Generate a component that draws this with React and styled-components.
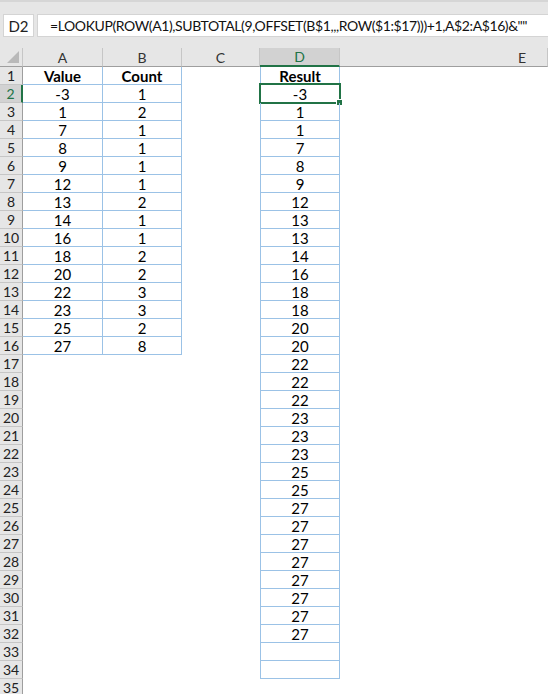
import styled, { createGlobalStyle } from "styled-components";

const GlobalStyle = createGlobalStyle`
  html, body {
    margin: 0;
    padding: 0;
    background: #ffffff;
  }
  body {
    font-family: Lato, "Liberation Sans", sans-serif;
    overflow: hidden;
  }
`;

const GREEN = "#217346";
const TABLE_LINE = "#9bc2e6";
const HEAD_BG = "#e6e6e6";
const HEAD_LINE = "#c6c6c6";

const formula = '=LOOKUP(ROW(A1),SUBTOTAL(9,OFFSET(B$1,,,ROW($1:$17)))+1,A$2:A$16)&""';

const values = [
  [-3, 1], [1, 2], [7, 1], [8, 1], [9, 1], [12, 1], [13, 2], [14, 1],
  [16, 1], [18, 2], [20, 2], [22, 3], [23, 3], [25, 2], [27, 8],
];

const results = [
  -3, 1, 1, 7, 8, 9, 12, 13, 13, 14, 16, 18, 18, 20, 20, 22, 22, 22,
  23, 23, 23, 25, 25, 27, 27, 27, 27, 27, 27, 27, 27,
];

const columns = ["A", "B", "C", "D", "E"];
const ROWS = 35;

export default function App() {
  const rows = [];
  for (let r = 1; r <= ROWS; r++) {
    const inTable = r <= 16;
    const inResult = r <= 34;
    let a = "";
    let b = "";
    let d = "";
    if (r === 1) {
      a = "Value";
      b = "Count";
      d = "Result";
    } else {
      if (inTable) {
        a = values[r - 2][0];
        b = values[r - 2][1];
      }
      if (r - 2 < results.length) d = results[r - 2];
    }
    const bold = r === 1;
    rows.push(
      <RowHead key={`h${r}`} $active={r === 2}>{r}</RowHead>,
      <Cell key={`a${r}`} $boxed={inTable} $bold={bold}>{a}</Cell>,
      <Cell key={`b${r}`} $boxed={inTable} $bold={bold}>{b}</Cell>,
      <Cell key={`c${r}`} />,
      <Cell key={`d${r}`} $boxed={inResult} $leftLine={inResult} $bold={bold}>
        {d}
        {r === 2 && (
          <>
            <Selection />
            <Handle />
          </>
        )}
      </Cell>,
      <Cell key={`e${r}`} />
    );
  }

  return (
    <>
      <GlobalStyle />
      <Window>
        <FormulaBar>
          <NameBox>D2</NameBox>
          <FormulaInput>{formula}</FormulaInput>
        </FormulaBar>
        <Sheet>
          <Corner>
            <svg width="12" height="12" viewBox="0 0 12 12">
              <polygon points="12,0 12,12 0,12" fill="#b9b9b9" />
            </svg>
          </Corner>
          {columns.map((c) => (
            <ColHead key={c} $active={c === "D"} $wide={c === "E"}>
              {c}
            </ColHead>
          ))}
          {rows}
        </Sheet>
      </Window>
    </>
  );
}

const Window = styled.div`
  width: 548px;
  height: 694px;
  overflow: hidden;
  background: ${HEAD_BG};
`;

const FormulaBar = styled.div`
  display: flex;
  align-items: stretch;
  gap: 3px;
  height: 48px;
  padding: 12px 0 11px 3px;
  box-sizing: border-box;
  border-top: 2px solid #d6d6d6;
  background: ${HEAD_BG};
`;

const NameBox = styled.div`
  width: 31px;
  display: flex;
  align-items: center;
  justify-content: center;
  background: #ffffff;
  border: 1px solid #d4d4d4;
  box-sizing: border-box;
  font-size: 15px;
  color: #222;
`;

const FormulaInput = styled.div`
  flex: 1;
  display: flex;
  align-items: center;
  padding-left: 12px;
  background: #ffffff;
  border: 1px solid #d4d4d4;
  border-right: none;
  box-sizing: border-box;
  font-size: 14px;
  letter-spacing: -0.4px;
  color: #111;
  white-space: nowrap;
  overflow: hidden;
`;

const Sheet = styled.div`
  display: grid;
  grid-template-columns: 23px 80px 79px 78px 80px 1fr;
  grid-template-rows: 19px;
  grid-auto-rows: 18px;
  background: #ffffff;
  font-size: 15px;
`;

const Corner = styled.div`
  background: ${HEAD_BG};
  border-right: 1px solid ${HEAD_LINE};
  border-bottom: 1px solid #9e9e9e;
  display: flex;
  align-items: flex-end;
  justify-content: flex-end;
  padding: 0 3px 3px 0;
  box-sizing: border-box;
`;

const ColHead = styled.div`
  display: flex;
  align-items: center;
  justify-content: ${(p) => (p.$wide ? "flex-start" : "center")};
  padding-left: ${(p) => (p.$wide ? "178px" : "0")};
  box-sizing: border-box;
  background: ${(p) => (p.$active ? "#d2d2d2" : HEAD_BG)};
  border-right: 1px solid ${HEAD_LINE};
  border-bottom: ${(p) => (p.$active ? `2px solid ${GREEN}` : "1px solid #9e9e9e")};
  color: ${(p) => (p.$active ? GREEN : "#333")};
  font-size: 14px;
`;

const RowHead = styled.div`
  display: flex;
  align-items: center;
  justify-content: center;
  box-sizing: border-box;
  background: ${(p) => (p.$active ? "#d2d2d2" : HEAD_BG)};
  border-right: ${(p) => (p.$active ? `2px solid ${GREEN}` : "1px solid #9e9e9e")};
  border-bottom: 1px solid ${HEAD_LINE};
  color: ${(p) => (p.$active ? GREEN : "#222")};
  font-size: 14px;
`;

const Cell = styled.div`
  position: relative;
  display: flex;
  align-items: center;
  justify-content: center;
  box-sizing: border-box;
  border-right: ${(p) => (p.$boxed ? `1px solid ${TABLE_LINE}` : "none")};
  border-bottom: ${(p) => (p.$boxed ? `1px solid ${TABLE_LINE}` : "none")};
  border-left: ${(p) => (p.$leftLine ? `1px solid ${TABLE_LINE}` : "none")};
  font-weight: ${(p) => (p.$bold ? 700 : 400)};
  color: #000;
  white-space: nowrap;
`;

const Selection = styled.div`
  position: absolute;
  left: -2px;
  top: -2px;
  right: -2px;
  bottom: -2px;
  border: 2px solid ${GREEN};
  pointer-events: none;
`;

const Handle = styled.div`
  position: absolute;
  right: -4px;
  bottom: -4px;
  width: 5px;
  height: 5px;
  background: ${GREEN};
  border: 1px solid #ffffff;
`;
